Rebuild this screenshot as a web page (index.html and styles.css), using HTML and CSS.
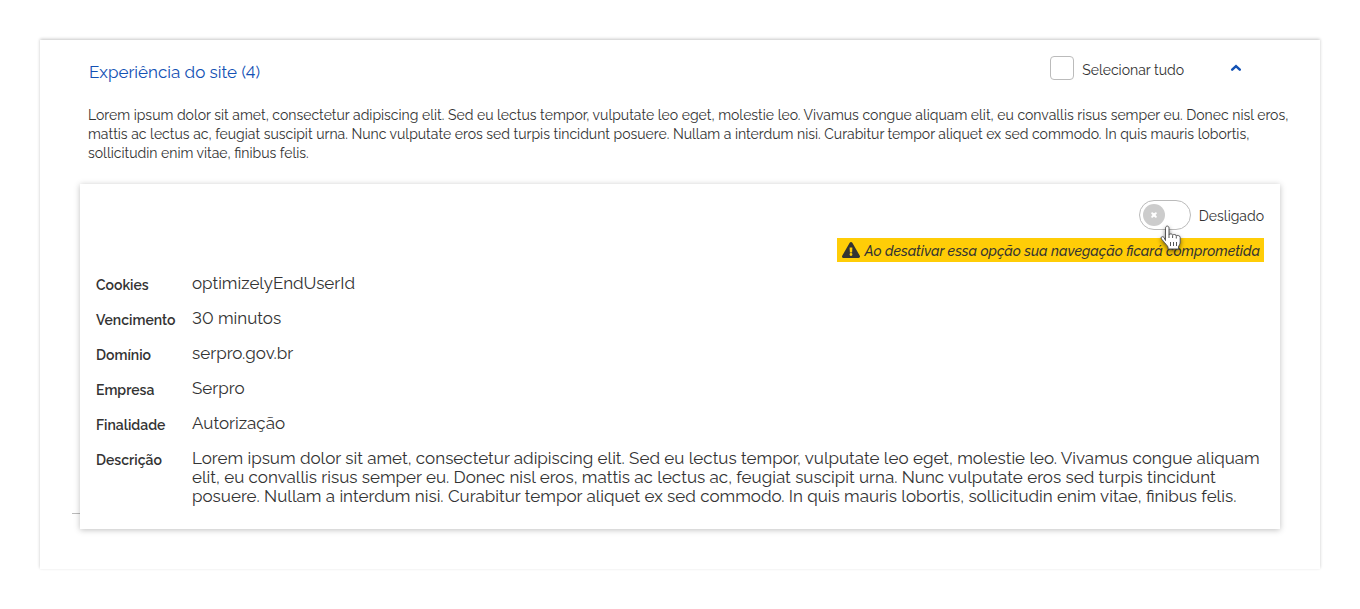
FILE: index.html
```html
<!DOCTYPE html>
<html lang="pt-BR">
<head>
<meta charset="utf-8">
<meta name="viewport" content="width=device-width, initial-scale=1">
<title>Experiência do site</title>
<link rel="stylesheet" href="styles.css">
</head>
<body>
<main class="panel">
  <header class="panel-header">
    <h1 class="panel-title">Experiência do site (4)</h1>
    <div class="select-all">
      <input class="checkbox" type="checkbox" id="select-all">
      <label for="select-all">Selecionar tudo</label>
    </div>
    <button class="collapse" type="button" aria-label="Recolher" aria-expanded="true">
      <svg width="12" height="8" viewBox="0 0 12 8" aria-hidden="true"><path d="M2.200 5.700 6 2.200l3.800 3.500" fill="none" stroke="#1351b4" stroke-width="2.500" stroke-linecap="round" stroke-linejoin="miter"/></svg>
    </button>
  </header>
  <p class="intro">Lorem ipsum dolor sit amet, consectetur adipiscing elit. Sed eu lectus tempor, vulputate leo eget, molestie leo. Vivamus congue aliquam elit, eu convallis risus semper eu. Donec nisl eros, mattis ac lectus ac, feugiat suscipit urna. Nunc vulputate eros sed turpis tincidunt posuere. Nullam a interdum nisi. Curabitur tempor aliquet ex sed commodo. In quis mauris lobortis, sollicitudin enim vitae, finibus felis.</p>
  <div class="card-wrap">
    <section class="card">
      <div class="switch-row">
        <span class="switch">
          <input class="switch-input" type="checkbox" role="switch" id="cookie-switch">
          <svg class="switch-mark" width="24" height="24" viewBox="0 0 24 24" aria-hidden="true"><circle cx="12" cy="12" r="11" fill="#ccc"/><path d="m10.200 10.200 3.600 3.600m0-3.600-3.600 3.600" stroke="#fff" stroke-width="2" stroke-linecap="round"/></svg>
          <svg class="pointer" width="24" height="28" viewBox="0 0 24 28" aria-hidden="true"><path d="M5.500 15.500V3.200C5.500.4 9 .4 9 3.200V10C9 8.500 12.600 8.500 12.600 10.300C13.200 9 16.300 9.200 16.300 11C17 10 20.200 10.400 20.200 12.500V17C20.200 19 18.900 20.500 18.500 22V24H8V22C7 20 5 18.500 3.400 16.200L1.400 14C.2 12 2.500 10.800 4 12.500Z" fill="#fff" stroke="#555" stroke-width="1" stroke-linejoin="round"/><path d="M9 10v3M12.600 10.500V13M16.300 11.300V13.500M10.500 17v4M13.500 17v4M16.500 17v4" fill="none" stroke="#555"/></svg>
        </span>
        <label class="switch-label" for="cookie-switch">Desligado</label>
      </div>
      <p class="warning" role="alert">
        <svg width="18" height="16" viewBox="0 0 576 512" aria-hidden="true"><path fill="#333" d="M569.500 440C588 472 564.800 512 527.900 512H48.100c-36.900 0-60-40.100-41.600-72L246.400 24c18.500-32 64.700-32 83.200 0l239.900 416zM288 354a46 46 0 1 0 0 92 46 46 0 0 0 0-92zm-43.700-165.300 7.400 136c.4 6.400 5.600 11.300 12 11.300h48.600c6.400 0 11.600-5 12-11.300l7.400-136c.4-6.900-5.100-12.700-12-12.700h-63.400c-6.900 0-12.400 5.800-12 12.700z"/></svg>
        <span class="warning-text">Ao desativar essa opção sua navegação ficará comprometida</span>
      </p>
      <dl class="details">
        <dt>Cookies</dt><dd>optimizelyEndUserId</dd>
        <dt>Vencimento</dt><dd>30 minutos</dd>
        <dt>Domínio</dt><dd>serpro.gov.br</dd>
        <dt>Empresa</dt><dd>Serpro</dd>
        <dt>Finalidade</dt><dd>Autorização</dd>
        <dt>Descrição</dt><dd>Lorem ipsum dolor sit amet, consectetur adipiscing elit. Sed eu lectus tempor, vulputate leo eget, molestie leo. Vivamus congue aliquam elit, eu convallis risus semper eu. Donec nisl eros, mattis ac lectus ac, feugiat suscipit urna. Nunc vulputate eros sed turpis tincidunt posuere. Nullam a interdum nisi. Curabitur tempor aliquet ex sed commodo. In quis mauris lobortis, sollicitudin enim vitae, finibus felis.</dd>
      </dl>
    </section>
  </div>
</main>
</body>
</html>
```
FILE: styles.css
```css
* { box-sizing: border-box; }
body {
  margin: 0;
  padding: 40px;
  background: #fff;
  color: #333;
  font-family: Raleway, Lato, "Open Sans", sans-serif;
  font-size: 14px;
  font-variant-numeric: lining-nums;
  line-height: 19px;
}
.panel {
  padding: 8px 32px 40px;
  background: #fff;
  box-shadow: 0 -1px 3px rgba(0, 0, 0, 0.22);
}
.panel-header {
  display: flex;
  align-items: center;
  height: 48px;
  padding: 0 40px 0 17px;
}
.panel-title {
  flex: 1;
  margin: 0;
  color: #1351b4;
  font-size: 17px;
  font-weight: 400;
  line-height: 24px;
}
.select-all {
  display: flex;
  align-items: center;
  gap: 8px;
  padding-bottom: 4px;
}
.checkbox {
  appearance: none;
  width: 24px;
  height: 24px;
  margin: 0 0 4px;
  border: 1px solid #bbb;
  border-radius: 4px;
  background: #fff;
}
.collapse {
  display: flex;
  align-items: center;
  justify-content: center;
  width: 24px;
  height: 24px;
  margin: 0 0 8px 40px;
  padding: 0;
  border: 0;
  background: none;
}
.intro {
  margin: 10px -8px 21px 16px;
}
.card-wrap {
  position: relative;
  padding: 0 8px;
}
.card-wrap::before {
  content: "";
  position: absolute;
  left: 0;
  bottom: 15px;
  width: 50%;
  height: 1px;
  background: #bbb;
}
.card {
  position: relative;
  padding: 16px 16px 23px;
  background: #fff;
  box-shadow: 0 1px 6px rgba(0, 0, 0, 0.25);
}
.switch-row {
  display: flex;
  justify-content: flex-end;
  align-items: center;
  gap: 8px;
}
.switch {
  position: relative;
  display: flex;
}
.switch-label {
  padding-top: 2px;
}
.switch-input {
  appearance: none;
  width: 52px;
  height: 30px;
  margin: 0;
  border: 1px solid #bbb;
  border-radius: 15px;
  background: #fff;
}
.switch-mark {
  position: absolute;
  left: 3px;
  top: 3px;
  pointer-events: none;
}
.pointer {
  position: absolute;
  z-index: 1;
  left: 21px;
  top: 25px;
  filter: drop-shadow(0 2px 2px rgba(0, 0, 0, 0.5));
  pointer-events: none;
}
.warning {
  display: flex;
  align-items: center;
  gap: 5px;
  width: fit-content;
  min-height: 24px;
  margin: 8px 0 12px auto;
  padding: 0 4px 0 5px;
  background: #ffcd07;
  font-style: italic;
  font-weight: 500;
}
.warning-text {
  padding-top: 2px;
}
.details {
  display: grid;
  grid-template-columns: 80px 1fr;
  gap: 14px 16px;
  margin: 0;
}
.details dt {
  padding-top: 2px;
  font-weight: 600;
}
.details dd {
  margin: 0;
  font-size: 17px;
}
```
